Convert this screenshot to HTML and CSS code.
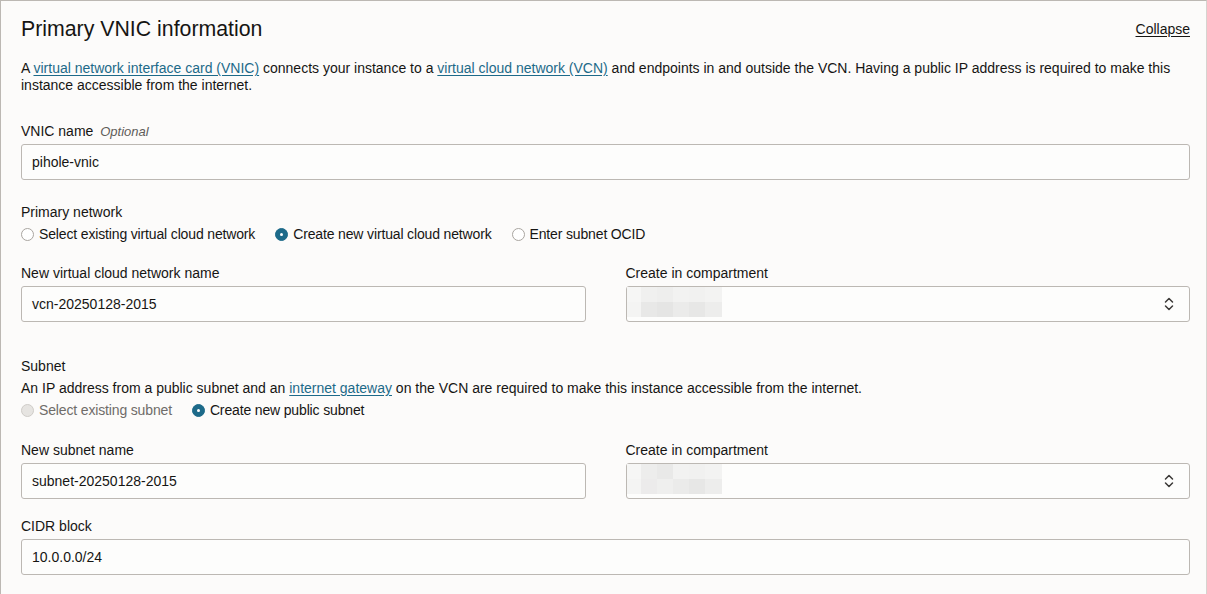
FILE: index.html
```html
<!DOCTYPE html>
<html>
<head>
<meta charset="utf-8">
<link rel="stylesheet" href="styles.css">
</head>
<body>
<section class="card">
  <div class="head">
    <h2 class="title">Primary VNIC information</h2>
    <a class="collapse" href="#">Collapse</a>
  </div>
  <p class="intro">A <a class="link" href="#">virtual network interface card (VNIC)</a> connects your instance to a <a class="link" href="#">virtual cloud network (VCN)</a> and endpoints in and outside the VCN. Having a public IP address is required to make this instance accessible from the internet.</p>

  <div class="field f-vnic">
    <div class="label">VNIC name <span class="opt">Optional</span></div>
    <div class="input">pihole-vnic</div>
  </div>

  <div class="group g-primary">
    <div class="label">Primary network</div>
    <div class="radios">
      <span class="radio"><span class="dot"></span>Select existing virtual cloud network</span>
      <span class="radio"><span class="dot on"></span>Create new virtual cloud network</span>
      <span class="radio"><span class="dot"></span>Enter subnet OCID</span>
    </div>
  </div>

  <div class="row r-vcn">
    <div class="field">
      <div class="label">New virtual cloud network name</div>
      <div class="input">vcn-20250128-2015</div>
    </div>
    <div class="field">
      <div class="label">Create in compartment</div>
      <div class="input select">
        <div class="blur"><i></i><i></i><i></i><i></i><i></i><i></i><i></i><i></i><i></i><i></i><i></i><i></i></div>
        <svg class="chev" width="12" height="16" viewBox="0 0 12 16"><path d="M2.5 6 L6 2.5 L9.5 6 M2.5 10 L6 13.5 L9.5 10" fill="none" stroke="#3b3937" stroke-width="1.5" stroke-linecap="round" stroke-linejoin="round"/></svg>
      </div>
    </div>
  </div>

  <div class="group g-subnet">
    <div class="label">Subnet</div>
    <div class="desc">An IP address from a public subnet and an <a class="link" href="#">internet gateway</a> on the VCN are required to make this instance accessible from the internet.</div>
    <div class="radios">
      <span class="radio disabled"><span class="dot dis"></span>Select existing subnet</span>
      <span class="radio"><span class="dot on"></span>Create new public subnet</span>
    </div>
  </div>

  <div class="row r-subnet">
    <div class="field">
      <div class="label">New subnet name</div>
      <div class="input">subnet-20250128-2015</div>
    </div>
    <div class="field">
      <div class="label">Create in compartment</div>
      <div class="input select">
        <div class="blur b2"><i></i><i></i><i></i><i></i><i></i><i></i><i></i><i></i><i></i><i></i><i></i><i></i></div>
        <svg class="chev" width="12" height="16" viewBox="0 0 12 16"><path d="M2.5 6 L6 2.5 L9.5 6 M2.5 10 L6 13.5 L9.5 10" fill="none" stroke="#3b3937" stroke-width="1.5" stroke-linecap="round" stroke-linejoin="round"/></svg>
      </div>
    </div>
  </div>

  <div class="field f-cidr">
    <div class="label">CIDR block</div>
    <div class="input">10.0.0.0/24</div>
  </div>
</section>
</body>
</html>
```
FILE: styles.css
```css
html, body {
  margin: 0;
  padding: 0;
  background: #fcfbfa;
}
body {
  font-family: "Liberation Sans", Arial, sans-serif;
  font-size: 14px;
  line-height: 17px;
  color: #161513;
}
.card {
  box-sizing: border-box;
  width: 1207px;
  height: 594px;
  border-top: 1px solid #bcb8b3;
  border-left: 1px solid #bcb8b3;
  border-right: 1px solid #d6d3cf;
  background: #fcfbfa;
  padding: 15px 16px 0 20px;
}
.head {
  display: flex;
  justify-content: space-between;
  align-items: center;
  height: 26px;
}
.title {
  margin: 0;
  font-size: 21.3px;
  font-weight: normal;
  line-height: 26px;
}
.collapse {
  color: #161513;
  text-decoration: underline;
  text-underline-offset: 2px;
}
.intro {
  margin: 18px 0 0 0;
}
.link {
  color: #1d6a89;
  text-decoration: underline;
  text-underline-offset: 2px;
}
.label {
  margin-bottom: 4px;
}
.opt {
  font-style: italic;
  font-size: 13px;
  color: #5f5c59;
  margin-left: 3px;
}
.input {
  box-sizing: border-box;
  height: 36px;
  border: 1px solid #bcb8b3;
  border-radius: 3px;
  background: #fdfdfc;
  padding: 0 10px;
  display: flex;
  align-items: center;
}
.f-vnic { margin-top: 29px; }
.g-primary { margin-top: 24px; }
.g-primary .label, .g-subnet .label { margin-bottom: 5px; }
.radios {
  display: flex;
  gap: 20px;
}
.radio {
  display: inline-flex;
  align-items: center;
  letter-spacing: -0.15px;
}
.radio.disabled { color: #6f6c69; }
.dot {
  box-sizing: border-box;
  width: 13px;
  height: 13px;
  border-radius: 50%;
  border: 1px solid #a9a5a0;
  background: #fff;
  margin-right: 5px;
  position: relative;
}
.dot.on {
  background: #1d6a89;
  border-color: #1d6a89;
}
.dot.on::after {
  content: "";
  position: absolute;
  left: 4px;
  top: 4px;
  width: 3px;
  height: 3px;
  border-radius: 50%;
  background: #fff;
}
.dot.dis {
  background: #e6e4e1;
  border-color: #cfccc8;
}
.row {
  display: grid;
  grid-template-columns: 1fr 1fr;
  column-gap: 40px;
}
.r-vcn { margin-top: 22px; }
.g-subnet { margin-top: 36px; }
.desc { margin-bottom: 5px; }
.r-subnet { margin-top: 23px; }
.f-cidr { margin-top: 19px; }
.select {
  padding: 0;
  justify-content: space-between;
  padding-right: 14px;
}
.blur {
  display: grid;
  grid-template-columns: 14px 16px 16px 16px 16px 17px;
  grid-template-rows: 15px 15px;
  width: 95px;
  height: 30px;
  align-self: flex-start;
}
.blur i:nth-child(1) { background: #f6f6f5; }
.blur i:nth-child(2) { background: #f0f0ef; }
.blur i:nth-child(3) { background: #eeeeed; }
.blur i:nth-child(4) { background: #f2f2f1; }
.blur i:nth-child(5) { background: #f1f1f0; }
.blur i:nth-child(6) { background: #f3f3f2; }
.blur i:nth-child(7) { background: #f4f4f3; }
.blur i:nth-child(8) { background: #e8e8e7; }
.blur i:nth-child(9) { background: #e5e5e4; }
.blur i:nth-child(10) { background: #ebebea; }
.blur i:nth-child(11) { background: #e7e7e6; }
.blur i:nth-child(12) { background: #ededec; }
.b2 i:nth-child(2) { background: #ededec; }
.b2 i:nth-child(3) { background: #e9e9e8; }
.b2 i:nth-child(8) { background: #ecebeb; }
.b2 i:nth-child(9) { background: #efefee; }
.chev { display: block; }
```
